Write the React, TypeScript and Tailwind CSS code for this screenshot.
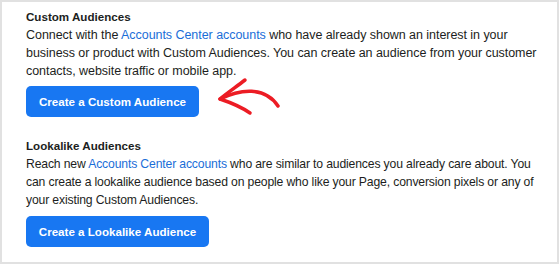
export default function App() {
  return (
    <div className="w-[559px] h-[264px] bg-white border-2 border-[#e1e1e1] pl-6 pr-1 pt-[6px] text-[12.2px] leading-[18px] text-[#1c1e21] font-['Liberation_Sans','Roboto',sans-serif] overflow-hidden whitespace-nowrap">
      {/* Custom audiences */}
      <section>
        <h2 className="font-bold text-[11.6px]">Custom Audiences</h2>
        <p className="text-[12.5px] tracking-[-0.05px]">
          Connect with the <a className="text-[#1a6ed8]">Accounts Center accounts</a> who have already shown an interest in your
          <br />
          business or product with Custom Audiences. You can create an audience from your customer
          <br />
          contacts, website traffic or mobile app.
        </p>
        <div className="relative mt-[6px]">
          <button className="h-[31px] w-[173px] rounded-[5px] bg-[#1877f2] text-white font-bold text-[11.6px]">
            Create a Custom Audience
          </button>
          <svg className="absolute left-[184px] top-[-12px]" width="80" height="50" viewBox="0 0 80 50" fill="none">
            <path d="M10 25 C 30 15, 55 12, 68 32" stroke="#ec1c24" strokeWidth="3.5" strokeLinecap="round" />
            <path d="M35 6 C 26 13, 17 19, 10 25 C 19 28, 30 32, 40 39" stroke="#ec1c24" strokeWidth="3.5" strokeLinecap="round" strokeLinejoin="round" />
          </svg>
        </div>
      </section>

      {/* Lookalike audiences */}
      <section className="mt-5">
        <h2 className="font-bold text-[11.6px]">Lookalike Audiences</h2>
        <p className="tracking-[-0.15px]">
          Reach new <a className="text-[#1a6ed8]">Accounts Center accounts</a> who are similar to audiences you already care about. You
          <br />
          can create a lookalike audience based on people who like your Page, conversion pixels or any of
          <br />
          your existing Custom Audiences.
        </p>
        <button className="mt-[7px] h-[31px] w-[183px] rounded-[5px] bg-[#1877f2] text-white font-bold text-[11.6px]">
          Create a Lookalike Audience
        </button>
      </section>
    </div>
  );
}
